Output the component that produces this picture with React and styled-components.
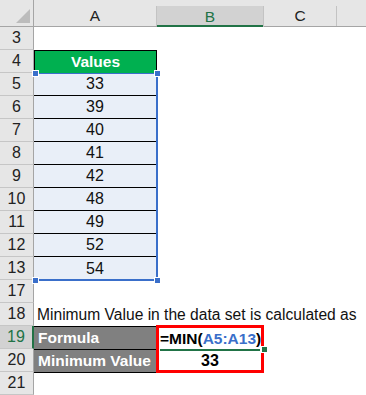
import React from "react";
import { styled, createGlobalStyle } from "styled-components";

const GlobalStyle = createGlobalStyle`
  html, body {
    margin: 0;
    padding: 0;
    background: #ffffff;
    overflow: hidden;
  }
  body {
    font-family: "Liberation Sans", Arial, sans-serif;
  }
`;

const ROWS = [3, 4, 5, 6, 7, 8, 9, 10, 11, 12, 13, 17, 18, 19, 20, 21];
const VALUES = [33, 39, 40, 41, 42, 48, 49, 52, 54];
const COLUMNS = [
  { name: "A", width: 123 },
  { name: "B", width: 107, selected: true },
  { name: "C", width: 73 },
];

const App = () => {
  return (
    <>
      <GlobalStyle />
      <Sheet>
        <HeaderBar>
          <Corner>
            <svg width="14" height="14" viewBox="0 0 14 14">
              <polygon points="14,0 14,14 0,14" fill="#bcbcbc" />
            </svg>
          </Corner>
          {COLUMNS.map((col) => (
            <ColHead key={col.name} $width={col.width} $selected={col.selected}>
              {col.name}
            </ColHead>
          ))}
          <ColFill />
        </HeaderBar>
        <Body>
          <RowHeads>
            {ROWS.map((r) => (
              <RowHead key={r} $selected={r === 19}>
                {r}
              </RowHead>
            ))}
          </RowHeads>
          <Grid>
            <TitleCell $row={2}>Values</TitleCell>
            <Range $row={3} $span={9}>
              {VALUES.map((v, i) => (
                <ValueCell key={v} $last={i === VALUES.length - 1}>
                  {v}
                </ValueCell>
              ))}
              <Handle $pos="tl" />
              <Handle $pos="tr" />
              <Handle $pos="bl" />
              <Handle $pos="br" />
            </Range>
            <Note $row={13}>Minimum Value in the data set is calculated as</Note>
            <LabelCell $row={14}>Formula</LabelCell>
            <LabelCell $row={15} $last>
              Minimum Value
            </LabelCell>
            <ResultBox $row={14}>
              <FormulaCell>
                =MIN(<Ref>A5:A13</Ref>)<Caret />
                <FillHandle />
              </FormulaCell>
              <ResultCell>33</ResultCell>
            </ResultBox>
          </Grid>
        </Body>
      </Sheet>
    </>
  );
};

export default App;

const Sheet = styled.div`
  width: 366px;
  height: 395px;
  display: flex;
  flex-direction: column;
  overflow: hidden;
`;

const HeaderBar = styled.div`
  display: flex;
  height: 28px;
  padding-top: 6px;
  box-sizing: border-box;
  background: #e6e6e6;
  border-bottom: 1px solid #a5a5a5;
`;

const Corner = styled.div`
  margin-top: -6px;
  border-right: 1px solid #a5a5a5;
  display: flex;
  align-items: flex-end;
  justify-content: flex-end;
  padding: 0 3px 3px 0;
  width: 30px;
`;

const ColHead = styled.div`
  width: ${(p) => p.$width}px;
  box-sizing: border-box;
  border-right: 1px solid #c3c3c3;
  display: flex;
  align-items: center;
  justify-content: center;
  font-size: 15.5px;
  color: ${(p) => (p.$selected ? "#217346" : "#222222")};
  background: ${(p) => (p.$selected ? "#d2d2d2" : "transparent")};
  box-shadow: ${(p) => (p.$selected ? "inset 0 -2px 0 #217346" : "none")};
  margin-bottom: ${(p) => (p.$selected ? "-1px" : "0")};
`;

const ColFill = styled.div`
  flex: 1;
`;

const Body = styled.div`
  display: flex;
  flex: 1;
`;

const RowHeads = styled.div`
  width: 34px;
  display: flex;
  flex-direction: column;
  flex-shrink: 0;
`;

const RowHead = styled.div`
  height: 23px;
  box-sizing: border-box;
  display: flex;
  align-items: center;
  justify-content: center;
  font-size: 16px;
  background: ${(p) => (p.$selected ? "#d2d2d2" : "#e6e6e6")};
  color: ${(p) => (p.$selected ? "#217346" : "#222222")};
  border-bottom: 1px solid #c6c6c6;
  border-right: ${(p) => (p.$selected ? "2px solid #217346" : "1px solid #a5a5a5")};
`;

const Grid = styled.div`
  display: grid;
  grid-template-columns: 123px 107px 73px 1fr;
  grid-template-rows: repeat(16, 23px);
  flex: 1;
`;

const TitleCell = styled.div`
  grid-column: 1;
  grid-row: ${(p) => p.$row};
  background: #00b050;
  border: 1px solid #000000;
  border-bottom: none;
  color: #ffffff;
  font-weight: bold;
  font-size: 15.5px;
  display: flex;
  align-items: center;
  justify-content: center;
`;

const Range = styled.div`
  grid-column: 1;
  grid-row: ${(p) => p.$row} / span ${(p) => p.$span};
  position: relative;
  display: flex;
  flex-direction: column;
  background: #e9eff8;

  &::after {
    content: "";
    position: absolute;
    top: 0;
    left: 0;
    right: -1px;
    bottom: -1px;
    border: 2px solid #3a6fca;
    border-top-width: 1px;
    border-left-width: 0;
    pointer-events: none;
  }
`;

const Handle = styled.span`
  position: absolute;
  width: 5px;
  height: 5px;
  background: #3a6fca;
  border: 1px solid #ffffff;
  z-index: 2;
  ${(p) => (p.$pos[0] === "t" ? "top: -3px;" : "bottom: -4px;")}
  ${(p) => (p.$pos[1] === "l" ? "left: -2px;" : "right: -4px;")}
`;

const ValueCell = styled.div`
  height: 23px;
  box-sizing: border-box;
  display: flex;
  align-items: center;
  justify-content: center;
  font-size: 16px;
  color: #111111;
  border-bottom: ${(p) => (p.$last ? "none" : "1px solid #000000")};
  margin-right: 1px;
`;

const Note = styled.div`
  grid-column: 1 / span 4;
  grid-row: ${(p) => p.$row};
  font-size: 15.6px;
  color: #111111;
  display: flex;
  align-items: center;
  padding-left: 3px;
  white-space: nowrap;
`;

const LabelCell = styled.div`
  grid-column: 1;
  grid-row: ${(p) => p.$row};
  background: #808080;
  color: #ffffff;
  font-weight: bold;
  font-size: 15.5px;
  display: flex;
  align-items: center;
  padding-left: 4px;
  border-top: 1px solid #000000;
  border-bottom: ${(p) => (p.$last ? "1px solid #000000" : "none")};
  margin-bottom: ${(p) => (p.$last ? "-1px" : "0")};
`;

const ResultBox = styled.div`
  grid-column: 2;
  grid-row: ${(p) => p.$row} / span 2;
  border: 3px solid #ff0000;
  margin: -1px 0 -1px -1px;
  display: flex;
  flex-direction: column;
  position: relative;
  z-index: 3;
`;

const FormulaCell = styled.div`
  height: 21px;
  display: flex;
  align-items: center;
  font-size: 15.5px;
  font-weight: bold;
  color: #000000;
  border-bottom: 2px solid #217346;
  margin: 0 1px;
  position: relative;
`;

const Ref = styled.span`
  color: #3a6fca;
`;

const Caret = styled.span`
  width: 1px;
  height: 18px;
  background: #000000;
  margin-left: 1px;
`;

const FillHandle = styled.span`
  position: absolute;
  right: -8px;
  bottom: -4px;
  width: 5px;
  height: 5px;
  background: #217346;
  border: 1px solid #ffffff;
`;

const ResultCell = styled.div`
  flex: 1;
  display: flex;
  align-items: center;
  justify-content: center;
  font-size: 16px;
  font-weight: bold;
  color: #000000;
`;
